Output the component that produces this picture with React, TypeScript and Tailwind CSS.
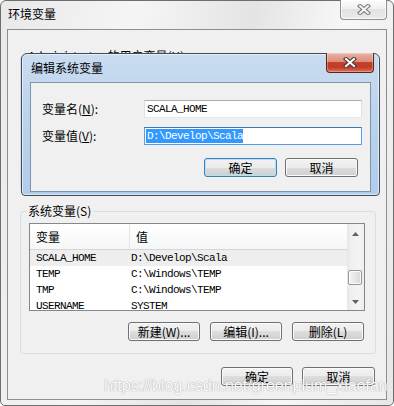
import React from "react";

function CloseX({ outline, fill }: { outline: string; fill: string }) {
  const d = "M3 2 L11 9 M11 2 L3 9";
  return (
    <svg width="14" height="11" viewBox="0 0 14 11">
      <path d={d} stroke={outline} strokeWidth={4.2} strokeLinecap="square" fill="none" />
      <path d={d} stroke={fill} strokeWidth={2} strokeLinecap="square" fill="none" />
    </svg>
  );
}

function Tri({ down }: { down?: boolean }) {
  return (
    <svg width="7" height="4" viewBox="0 0 7 4">
      <path d={down ? "M0 0 L7 0 L3.5 4 Z" : "M3.5 0 L7 4 L0 4 Z"} fill="#5f6368" />
    </svg>
  );
}

function Btn({ children, w, def }: { children: React.ReactNode; w: string; def?: boolean }) {
  return (
    <div
      className={`h-[19px] ${w} rounded-[3px] border flex items-center justify-center leading-[14px] text-[12px] bg-[linear-gradient(to_bottom,#f2f2f2_0%,#ebebeb_50%,#dddddd_50%,#cfcfcf_100%)] ${
        def
          ? "border-[#3c7fb1] shadow-[inset_0_0_0_1px_#aee3fb]"
          : "border-[#707070] shadow-[inset_0_0_0_1px_#fbfbfb]"
      }`}
    >
      {children}
    </div>
  );
}

const mono = "font-['Liberation_Mono',monospace] text-[11px] tracking-[-0.6px]";

const rows = [
  { k: "SCALA_HOME", v: "D:\\Develop\\Scala", sel: true },
  { k: "TEMP", v: "C:\\Windows\\TEMP" },
  { k: "TMP", v: "C:\\Windows\\TEMP" },
  { k: "USERNAME", v: "SYSTEM" },
];

export default function App() {
  return (
    <div className="relative w-[394px] h-[406px] bg-white overflow-hidden font-['Noto_Sans_CJK_SC',sans-serif] text-[12px] text-black">
      {/* outer window */}
      <div className="w-[394px] h-[406px] border border-[#6e6e6e] rounded-t-[6px] rounded-b-[5px] bg-[linear-gradient(100deg,#e9e9e9_0%,#f5f5f5_30%,#e4e4e4_55%,#f7f7f7_75%,#e7e7e7_100%)] flex flex-col">
        <div className="h-[28px] flex items-start justify-between shrink-0">
          <div className="pl-[7px] pt-[6px] leading-[14px]">环境变量</div>
          <div className="mr-[6px] -mt-px w-[47px] h-[20px] rounded-b-[4px] border border-[#8e8e8e] border-t-0 bg-[linear-gradient(to_bottom,#fbfbfb_0%,#f0f0f0_45%,#e2e2e2_50%,#eaeaea_100%)] shadow-[inset_0_0_0_1px_rgba(255,255,255,0.8)] flex items-center justify-center">
            <CloseX outline="#7b7b7b" fill="#f6f6f6" />
          </div>
        </div>
        <div className="mx-[6px] h-[371px] border border-[#8e8e8e] bg-[#f0f0f0] flex flex-col">
          <fieldset className="ml-[12px] mr-[10px] mt-[20px] h-[140px] border border-[#d5dfe5] rounded-[3px] pl-[5px]">
            <legend className="px-[2px] leading-[12px]">Administrator 的用户变量(U)</legend>
          </fieldset>
          <fieldset className="ml-[12px] mr-[10px] mt-[15px] border border-[#d5dfe5] rounded-[3px] pl-[5px] pr-[10px] pt-[6px] pb-[12px]">
            <legend className="px-[2px] leading-[12px]">系统变量(S)</legend>
            <div className="ml-[3px] h-[88px] border border-[#828790] bg-white flex">
              <div className="w-[317px] flex flex-col overflow-hidden">
                <div className="h-[26px] shrink-0 flex border-b border-[#d5d5d5] bg-[linear-gradient(to_bottom,#ffffff,#f5f6f7)]">
                  <div className="w-[100px] border-r border-[#e3e5e7] pl-[6px] flex items-center">变量</div>
                  <div className="pl-[6px] flex items-center">值</div>
                </div>
                {rows.map((r) => (
                  <div
                    key={r.k}
                    className={`h-[16px] shrink-0 flex items-center ${mono} ${r.sel ? "bg-[#eeeeee]" : ""}`}
                  >
                    <div className="w-[101px] pl-[6px]">{r.k}</div>
                    <div>{r.v}</div>
                  </div>
                ))}
              </div>
              <div className="w-[17px] flex flex-col bg-[linear-gradient(to_right,#e6e6e6,#f0f0f0_25%,#f4f4f4_75%,#ececec)]">
                <div className="h-[17px] flex items-center justify-center pt-[3px]">
                  <Tri />
                </div>
                <div className="flex-1">
                  <div className="mt-[29px] ml-[1px] w-[14px] h-[15px] rounded-[2px] border border-[#969696] bg-[linear-gradient(to_right,#f4f4f4,#e6e6e6_50%,#d9d9d9)] shadow-[inset_0_0_0_1px_rgba(255,255,255,0.8)]" />
                </div>
                <div className="h-[17px] flex items-center justify-center">
                  <Tri down />
                </div>
              </div>
            </div>
            <div className="ml-[3px] mt-[11px] pr-px flex justify-end gap-[10px]">
              <Btn w="w-[72px]">新建(W)...</Btn>
              <Btn w="w-[72px]">编辑(I)...</Btn>
              <Btn w="w-[72px]">删除(L)</Btn>
            </div>
          </fieldset>
          <div className="mt-[13px] pr-[11px] flex justify-end gap-[9px]">
            <Btn w="w-[72px]">确定</Btn>
            <Btn w="w-[73px]">取消</Btn>
          </div>
        </div>
      </div>

      {/* edit dialog */}
      <div className="absolute left-[21px] top-[53px] w-[359px] h-[143px] rounded-t-[6px] rounded-b-[4px] border border-[#3f4b59] bg-[linear-gradient(to_bottom,#c9dcf0_0%,#bad2ec_50%,#b1cde9_100%)] shadow-[inset_0_0_0_1px_rgba(255,255,255,0.55)] flex flex-col">
        <div className="h-[28px] shrink-0 flex items-start justify-between">
          <div className="pl-[9px] pt-[7px] leading-[14px]">编辑系统变量</div>
          <div className="mr-[5px] -mt-px w-[48px] h-[20px] rounded-b-[4px] border border-[#5e2418] border-t-0 bg-[linear-gradient(to_bottom,#e9b2a4_0%,#dc8f7d_45%,#c4422b_50%,#c13b25_75%,#d9745c_100%)] shadow-[inset_0_0_0_1px_rgba(255,255,255,0.3)] flex items-center justify-center">
            <CloseX outline="#4a3a38" fill="#ffffff" />
          </div>
        </div>
        <div className="mx-[8px] h-[110px] border border-[#7f93ab] bg-[#f0f0f0] pt-[17px] pl-[11px]">
          <div className="h-[18px] flex items-center">
            <div className="w-[102px] leading-[14px]">
              变量名(<span className="underline">N</span>):
            </div>
            <div className={`w-[218px] h-[18px] bg-white border border-[#dbdfe6] border-t-[#abadb3] border-b-[#e3e9ef] pl-[2px] flex items-center ${mono}`}>
              SCALA_HOME
            </div>
          </div>
          <div className="mt-[9px] h-[18px] flex items-center">
            <div className="w-[102px] leading-[14px]">
              变量值(<span className="underline">V</span>):
            </div>
            <div className={`w-[218px] h-[18px] bg-white border border-[#569de5] border-t-[#3d7bad] pl-px flex items-center ${mono}`}>
              <span className="bg-[#3399ff] text-white leading-[14px] pl-px">D:\Develop\Scala</span>
            </div>
          </div>
          <div className="mt-[13px] pr-[12px] flex justify-end gap-[8px]">
            <Btn w="w-[73px]" def>
              确定
            </Btn>
            <Btn w="w-[73px]">取消</Btn>
          </div>
        </div>
      </div>

      {/* watermark */}
      <div className="absolute left-[104px] top-[377px] leading-[18px] text-[16px] font-['Liberation_Sans',Arial,sans-serif] text-white [text-shadow:0_0_1px_rgba(0,0,0,0.5)] whitespace-nowrap pointer-events-none">
        https://blog.csdn.net/greenplum_xiaofan
      </div>
    </div>
  );
}
